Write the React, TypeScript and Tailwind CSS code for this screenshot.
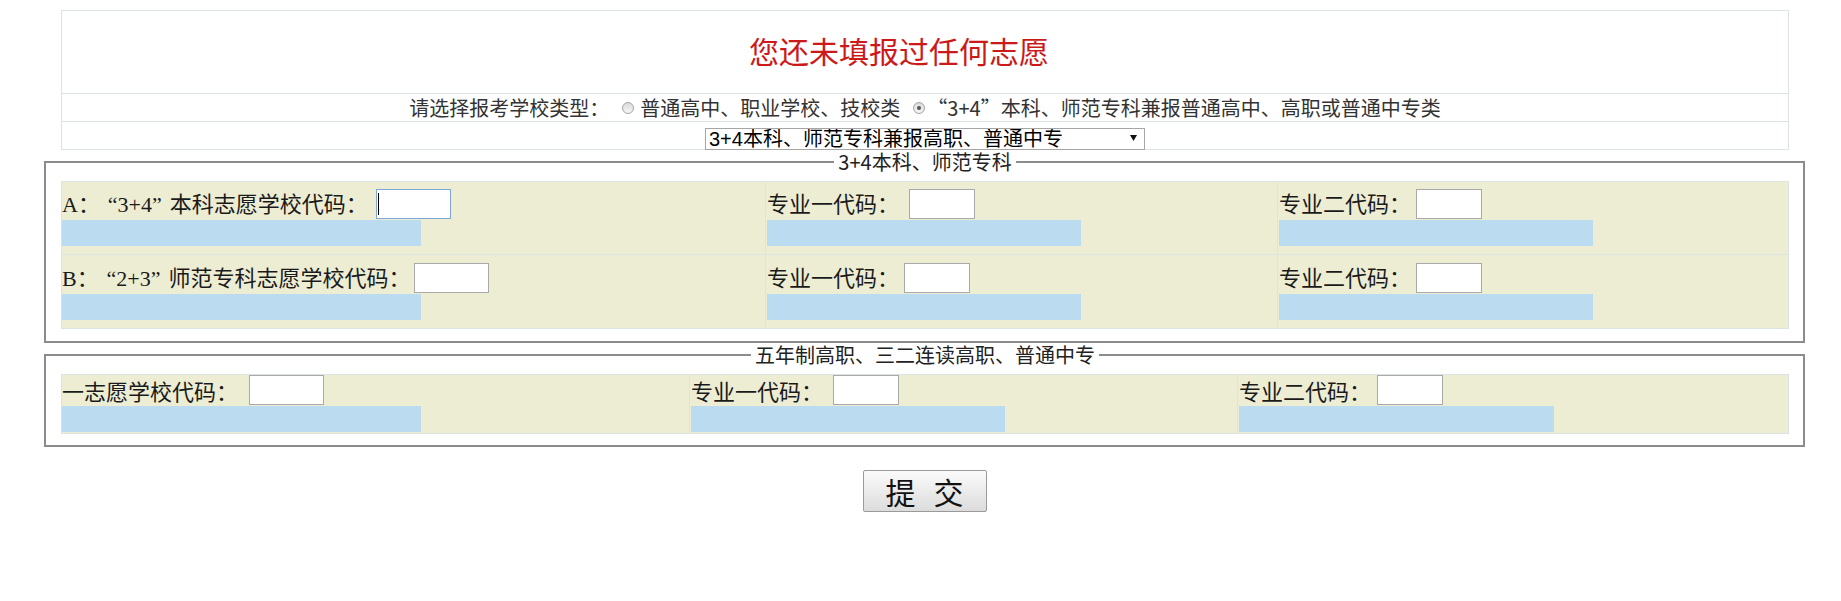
import type { ReactNode } from "react";

type CellProps = {
  label: ReactNode;
  labelW: string;
  inputW: string;
  barW: string;
  className?: string;
  focused?: boolean;
};

// SimSun-style wide curly quotes
const LQ = () => <span className="ml-[0.36em]">“</span>;
const RQ = () => <span className="mr-[0.36em]">”</span>;

function Cell({ label, labelW, inputW, barW, className, focused }: CellProps) {
  return (
    <div className={className}>
      <div className="flex h-[31px] items-center">
        <span className={`${labelW} shrink-0 whitespace-nowrap`}>{label}</span>
        <span className="relative self-start">
          <input
            type="text"
            className={`block h-[30px] ${inputW} border bg-white outline-none ${
              focused ? "border-[#7fa7d6]" : "border-[#a9a9a9]"
            }`}
          />
          {focused && <span className="absolute left-[2px] top-[4px] h-[22px] w-px bg-black" />}
        </span>
      </div>
      <div className={`h-[26px] bg-[#bbdcf0] ${barW}`} />
    </div>
  );
}

function Radio({ checked }: { checked?: boolean }) {
  return (
    <span className="flex h-[12px] w-[12px] shrink-0 items-center justify-center rounded-full border border-[#a3a3a3] bg-linear-to-b from-[#dadada] to-[#f7f7f7]">
      {checked && <span className="h-[4px] w-[4px] rounded-full bg-[#555]" />}
    </span>
  );
}

export default function App() {
  return (
    <div className="min-h-screen bg-white pl-[44px] pt-[10px] font-['Noto_Sans_CJK_SC',sans-serif] text-[#222]">
      <div className="w-[1761px]">
        {/* header table */}
        <div className="ml-[17px] w-[1728px] border border-[#dbe3e3]">
          <div className="flex h-[82px] items-center justify-center pb-[4px] pr-[52px] text-[30px] text-[#cc1a1a]">
            您还未填报过任何志愿
          </div>
          <div className="flex h-[28px] items-center justify-center border-t border-[#dbe3e3] pt-[1px] text-[20px] leading-[20px] text-[#333]">
            <span>请选择报考学校类型：</span>
            <span className="ml-[13px]">
              <Radio />
            </span>
            <span className="ml-[6px]">普通高中、职业学校、技校类</span>
            <span className="ml-[13px]">
              <Radio checked />
            </span>
            <span className="ml-[2px] whitespace-nowrap">“3+4”本科、师范专科兼报普通高中、高职或普通中专类</span>
          </div>
          <div className="flex h-[28px] justify-center border-t border-[#dbe3e3]">
            <div className="relative mt-[5px] h-[22px] w-[440px]">
              <select className="h-full w-full appearance-none border border-[#a6a6a6] bg-white pl-[3px] font-['Liberation_Sans','Noto_Sans_CJK_SC',sans-serif] text-[20px] leading-[20px] text-black outline-none">
                <option>3+4本科、师范专科兼报高职、普通中专</option>
              </select>
              <svg
                className="pointer-events-none absolute right-[8px] top-[8px]"
                width="7"
                height="6"
                viewBox="0 0 7 6"
              >
                <path d="M0 0h7L3.5 6z" fill="#111" />
              </svg>
            </div>
          </div>
        </div>

        {/* 3+4 */}
        <fieldset className="mt-[2px] w-[1761px] border-2 border-[#8c8c8c] pb-[12px] pl-[15px] pr-[14px] pt-[9px]">
          <legend className="mx-auto px-[4px] text-[20px] leading-[20px] text-[#222]">3+4本科、师范专科</legend>
          <div className="w-[1728px] border border-[#dbe3e3] bg-[#ededd4] font-['Liberation_Serif','Noto_Sans_CJK_SC',serif] text-[22px] text-[#1a1a1a]">
            <div className="grid grid-cols-[703px_512px_511px]">
              <Cell
                className="pb-[8px] pt-[7px]"
                label={
                  <>
                    A：<LQ />3+4<RQ />本科志愿学校代码：
                  </>
                }
                labelW="w-[314px]"
                inputW="w-[75px]"
                barW="w-[359px]"
                focused
              />
              <Cell
                className="border-l border-[#dbe3e3] pb-[8px] pl-[1px] pt-[7px]"
                label="专业一代码："
                labelW="w-[142px]"
                inputW="w-[66px]"
                barW="w-[314px]"
              />
              <Cell
                className="border-l border-[#dbe3e3] pb-[8px] pl-[1px] pt-[7px]"
                label="专业二代码："
                labelW="w-[137px]"
                inputW="w-[66px]"
                barW="w-[314px]"
              />
            </div>
            <div className="grid grid-cols-[703px_512px_511px] border-t border-[#dbe3e3]">
              <Cell
                className="pb-[8px] pt-[8px]"
                label={
                  <>
                    B：<LQ />2+3<RQ />师范专科志愿学校代码：
                  </>
                }
                labelW="w-[352px]"
                inputW="w-[75px]"
                barW="w-[359px]"
              />
              <Cell
                className="border-l border-[#dbe3e3] pb-[8px] pl-[1px] pt-[8px]"
                label="专业一代码："
                labelW="w-[137px]"
                inputW="w-[66px]"
                barW="w-[314px]"
              />
              <Cell
                className="border-l border-[#dbe3e3] pb-[8px] pl-[1px] pt-[8px]"
                label="专业二代码："
                labelW="w-[137px]"
                inputW="w-[66px]"
                barW="w-[314px]"
              />
            </div>
          </div>
        </fieldset>

        {/* five-year */}
        <fieldset className="mt-[2px] w-[1761px] border-2 border-[#8c8c8c] pb-[11px] pl-[15px] pr-[14px] pt-[9px]">
          <legend className="mx-auto px-[4px] text-[20px] leading-[20px] text-[#222]">
            五年制高职、三二连读高职、普通中专
          </legend>
          <div className="w-[1728px] border border-[#dbe3e3] bg-[#ededd4] text-[22px] text-[#1a1a1a]">
            <div className="grid grid-cols-[627px_548px_551px]">
              <Cell className="pb-[1px]" label="一志愿学校代码：" labelW="w-[187px]" inputW="w-[75px]" barW="w-[359px]" />
              <Cell
                className="border-l border-[#dbe3e3] pb-[1px] pl-[1px]"
                label="专业一代码："
                labelW="w-[142px]"
                inputW="w-[66px]"
                barW="w-[314px]"
              />
              <Cell
                className="border-l border-[#dbe3e3] pb-[1px] pl-[1px]"
                label="专业二代码："
                labelW="w-[138px]"
                inputW="w-[66px]"
                barW="w-[315px]"
              />
            </div>
          </div>
        </fieldset>

        <div className="mt-[23px] flex justify-center">
          <button
            type="button"
            className="flex h-[42px] w-[124px] items-center justify-center gap-[18px] rounded-[2px] border border-[#9a9a9a] bg-linear-to-b from-[#fbfbfb] to-[#dcdcdc] text-[30px] leading-none text-[#111]"
          >
            <span>提</span>
            <span>交</span>
          </button>
        </div>
      </div>
    </div>
  );
}
